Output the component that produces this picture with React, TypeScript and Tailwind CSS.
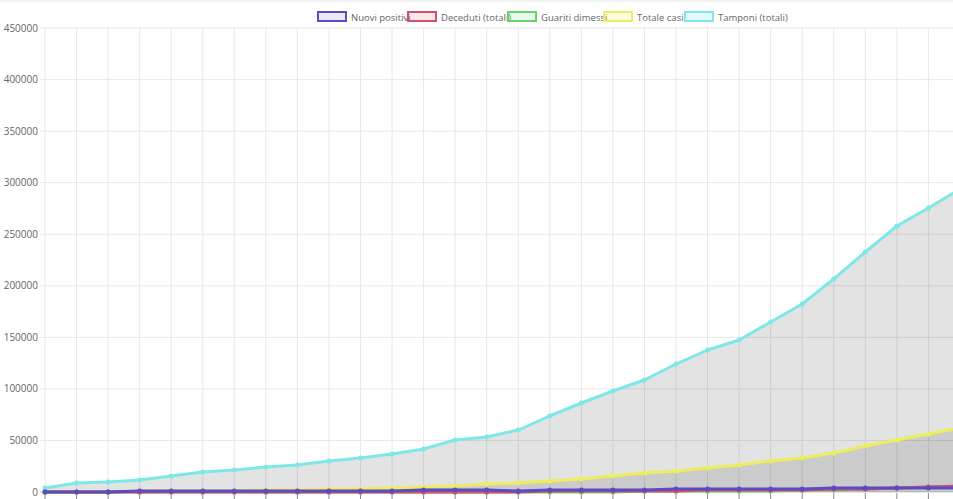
const X0 = 45, DX = 31.55;
const tam = [488,483,482,480,476,472,470,467,465,461,458,454,449,440,437,430,416,403,391,380,364,350,340,322,304,279,252,226,208,189];
const tot = [492,492,492,491,491,491,491,490,490,489,489,488,487,486,484,483,481,479,476,473,471,468,465,461,458,453,446,440,434,428];
const pos = [492,492,492,491,491,491,491,491,491,491,491,491,490,490,490,491,490,490,490,490,489,489,489,489,489,488,488,488,488,488];
const dec = [492,492,492,492,492,492,492,492,492,492,492,492,492,492,492,492,491,491,491,491,491,490,490,490,490,489,489,488,487,486];
const gua = [492,492,492,492,492,492,492,492,492,492,492,492,492,492,492,492,492,492,492,491,491,491,491,491,490,490,489,488,487,486];
const pts = (a: number[]) => a.map((y, i) => `${X0 + i * DX},${y}`).join(" ");
const area = (a: number[]) => `M${X0},492 L${pts(a).split(" ").join(" L")} L${X0 + (a.length - 1) * DX},492 Z`;
const legend = [
  ["Nuovi positivi", "#5b4bc4", "rgba(91,75,196,0.12)", 318],
  ["Deceduti (totali)", "#d4506c", "rgba(212,80,108,0.12)", 408],
  ["Guariti dimessi", "#6ad46a", "rgba(106,212,106,0.15)", 508],
  ["Totale casi", "#eded5e", "rgba(237,237,94,0.2)", 604],
  ["Tamponi (totali)", "#7ee8e8", "rgba(126,232,232,0.2)", 685],
] as const;
export default function App() {
  const ys = [0,1,2,3,4,5,6,7,8,9];
  return (
    <div className="w-[953px] h-[499px] bg-white overflow-hidden" style={{ fontFamily: "'Open Sans', 'Liberation Sans', sans-serif" }}>
      <svg width="953" height="499" className="block">
        <line x1="0" y1="1" x2="953" y2="1" stroke="#e5e5e5" />
        {legend.map(([t, c, f, x]) => (
          <g key={t}>
            <rect x={x} y={12} width={28} height={9} fill={f} stroke={c} strokeWidth={2} />
            <text x={x + 33} y={20.5} fontSize="9.5" fill="#666">{t}</text>
          </g>
        ))}
        {ys.map(i => {
          const y = 492 - i * 51.55;
          return (
            <g key={i}>
              <line x1={40} y1={y} x2={953} y2={y} stroke={i === 0 ? "#ccc" : "#e8e8e8"} />
              <text x={38} y={y + 3.5} fontSize="10" fill="#666" textAnchor="end">{i * 50000}</text>
            </g>
          );
        })}
        {tam.map((_, i) => (
          <g key={i}>
            <line x1={X0 + i * DX} y1={28} x2={X0 + i * DX} y2={492} stroke="#e8e8e8" />
            <line x1={X0 + i * DX} y1={493} x2={X0 + i * DX} y2={499} stroke="#888" />
          </g>
        ))}
        <path d={area(tam)} fill="rgba(0,0,0,0.11)" />
        <path d={area(tot)} fill="rgba(0,0,0,0.1)" />
        {[[tam, "#7ee8e8"], [tot, "#eded5e"], [gua, "#6ad46a"], [dec, "#d4506c"], [pos, "#5b4bc4"]].map(([a, c], k) => (
          <g key={k}>
            <polyline points={pts(a as number[])} fill="none" stroke={c as string} strokeWidth={3} strokeLinejoin="round" />
            {(a as number[]).map((y, i) => <circle key={i} cx={X0 + i * DX} cy={y} r={2.5} fill={c as string} />)}
          </g>
        ))}
      </svg>
    </div>
  );
}
